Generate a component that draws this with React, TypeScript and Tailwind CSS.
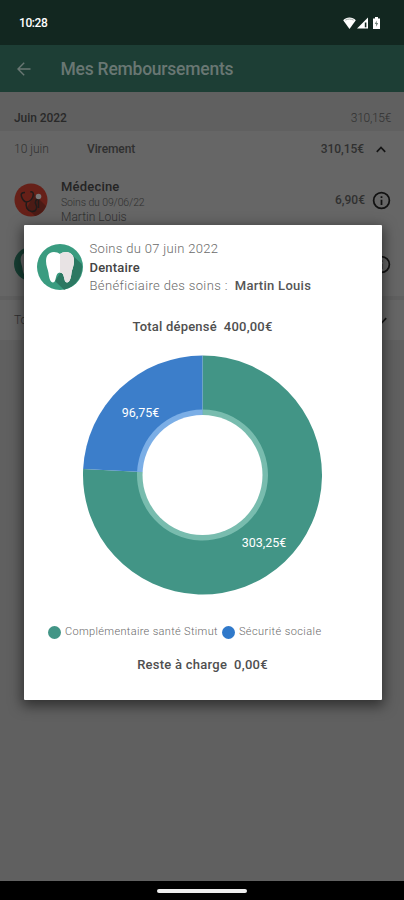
import type { ReactNode } from "react";

const slices = [
  { label: "Complémentaire santé Stimut", value: 303.25, color: "#429586", ring: "#78bcae" },
  { label: "Sécurité sociale", value: 96.75, color: "#3c7eca", ring: "#7baee6" },
];

const CENTER = 120;

function polar(radius: number, ratio: number) {
  const angle = ratio * Math.PI * 2;
  return `${CENTER + radius * Math.sin(angle)} ${CENTER - radius * Math.cos(angle)}`;
}

function slicePath(radius: number, from: number, to: number) {
  const large = to - from > 0.5 ? 1 : 0;
  return `M${CENTER} ${CENTER}L${polar(radius, from)}A${radius} ${radius} 0 ${large} 1 ${polar(radius, to)}Z`;
}

function DonutChart() {
  const total = slices.reduce((sum, s) => sum + s.value, 0);
  const split = slices[0].value / total;
  const ranges = [
    [0, split],
    [split, 1],
  ];

  return (
    <svg viewBox="-0.5 0 240 240" className="ml-[58.500px] block h-[240px] w-[240px]">
      {slices.map((s, i) => (
        <path key={s.label} d={slicePath(119.5, ranges[i][0], ranges[i][1])} fill={s.color} />
      ))}
      {slices.map((s, i) => (
        <path key={s.label} d={slicePath(65.5, ranges[i][0], ranges[i][1])} fill={s.ring} />
      ))}
      <circle cx={CENTER} cy={CENTER} r="60" fill="#fff" />
      <g fill="#fff" fontSize="12.5" textAnchor="middle">
        <text x="58" y="62">96,75€</text>
        <text x="181.5" y="192">303,25€</text>
      </g>
    </svg>
  );
}

function ToothIcon({ className }: { className: string }) {
  return (
    <svg viewBox="0 0 46 46" className={className}>
      <circle cx="23" cy="23" r="23" fill="#3a9c80" />
      <path d="M35 11 44.800 20A23 23 0 0 1 27 45.700L18 37Z" fill="#2c7862" />
      <path
        d="M23 10C19 6.500 9 6.500 9 17c0 5 2 8 2.500 12 .6 5.500 2 9.500 4.500 9.500 4 0 1.500-10 7-10s3 10 7 10c2.500 0 3.900-4 4.500-9.500.5-4 2.500-7 2.500-12 0-10.500-10-10.500-14-7Z"
        fill="#fff"
      />
      <path d="M23 10c4-3.500 14-3.500 14 7 0 5-2 8-2.500 12-.6 5.500-2 9.500-4.500 9.500-4 0-1.500-10-7-10Z" fill="#e8e3e4" />
    </svg>
  );
}

function StethoscopeIcon() {
  return (
    <svg viewBox="0 0 34 34" className="h-[34px] w-[34px]" fill="none">
      <circle cx="17" cy="17" r="16.500" fill="#662018" />
      <path d="m20 11 12 12a16.500 16.500 0 0 1-11 10l-8-8Z" fill="#4b1b15" />
      <path
        d="M11 9.500c-3 0-4.500 1-3.500 4 .8 2.500 2 5 5 5.500 4-.5 6.500-4 6.800-7.500.2-2-1-3-3-2.500M12.500 19c-1.500 5 1 9 5 9.500 5 .5 6-4 4.500-7-1.500-2.500 0-5 2.500-6.500v10"
        stroke="#211b1a"
        strokeWidth="1.500"
      />
      <circle cx="24.500" cy="13.500" r="2.800" fill="#777" />
    </svg>
  );
}

function InfoIcon() {
  return (
    <svg viewBox="0 0 24 24" className="h-[21px] w-[21px]" fill="#111">
      <path d="M11 17h2v-6h-2v6Zm0-8h2V7h-2v2Zm1-7a10 10 0 1 0 0 20 10 10 0 0 0 0-20Zm0 18a8 8 0 1 1 0-16 8 8 0 0 1 0 16Z" />
    </svg>
  );
}

function Chevron({ down = false }: { down?: boolean }) {
  return (
    <svg
      viewBox="0 0 10 7"
      className={`h-[7px] w-[10px] ${down ? "rotate-180" : ""}`}
      fill="none"
      stroke="#151515"
      strokeWidth="1.700"
    >
      <path d="m.8 5.800 4.200-4.300 4.200 4.300" />
    </svg>
  );
}

function StatusBar() {
  return (
    <div className="flex h-[45px] shrink-0 items-center justify-between bg-[#122720] pl-[19px] pr-[23px]">
      <span className="text-[12px] font-medium tracking-[-0.4px] text-white">10:28</span>
      <svg viewBox="0 0 38 14" className="h-[14px] w-[38px]" fill="#fff">
        <path d="M6.500 13 .2 4.200C3.500.6 9.500.6 12.800 4.200Z" />
        <path d="M2.300 4.200c2.400-1.500 6-1.500 8.400 0" stroke="#7e8884" strokeWidth=".7" fill="none" />
        <path d="M14 12.500 25 1.500v11Z" />
        <path d="M21.800 6.500h1.600v4.800h-1.600Z" fill="#122720" />
        <path d="M30 2.500h2V1h3v1.500h2V13h-7Z" />
        <path d="M33.700 4.500 31.800 8h1.300v2.800L35.200 7h-1.500Z" fill="#718079" />
      </svg>
    </div>
  );
}

function CareRow({ icon, amount, children }: { icon: ReactNode; amount?: string; children?: ReactNode }) {
  return (
    <div className="flex h-[64px] items-center pl-[14px] pr-3">
      {icon}
      <div className="ml-[13px] flex-1 pt-[3px]">{children}</div>
      <span className="mr-[6px] text-[12px] font-medium">{amount}</span>
      <InfoIcon />
    </div>
  );
}

function Refunds() {
  return (
    <main className="flex-1 bg-[#606060] pt-3 text-[#303030]">
      <div className="flex h-[27px] items-center justify-between pl-[14px] pr-[13px] text-[12px]">
        <span className="font-medium tracking-[-0.05px] text-[#292929]">Juin 2022</span>
        <span className="font-light tracking-[-0.3px]">310,15€</span>
      </div>
      <div className="bg-[#666]">
        <div className="flex h-[37px] items-center pb-px pl-[14px] pr-[18px] text-[12px]">
          <span className="w-[73px] font-light">10 juin</span>
          <span className="flex-1 font-medium tracking-[-0.1px]">Virement</span>
          <span className="mr-3 font-medium tracking-[-0.05px]">310,15€</span>
          <Chevron />
        </div>
        <CareRow icon={<StethoscopeIcon />} amount="6,90€">
          <p className="text-[13px] font-medium leading-[16px] tracking-[0.2px] text-[#242424]">Médecine</p>
          <p className="text-[10.500px] font-light leading-[15px] tracking-[-0.12px]">Soins du 09/06/22</p>
          <p className="text-[12px] font-light leading-[15px]">Martin Louis</p>
        </CareRow>
        <CareRow icon={<ToothIcon className="h-[34px] w-[34px] brightness-[0.4]" />} />
      </div>
      <div className="mt-[4px] flex h-[40px] items-center justify-between bg-[#666] pl-[14px] pr-[17px] text-[12px] font-light">
        <span>Total</span>
        <Chevron down />
      </div>
    </main>
  );
}

function CareDialog() {
  return (
    <div
      role="dialog"
      className="absolute left-[23.500px] top-[225px] h-[474.500px] w-[358px] rounded-[1px] bg-white text-[#6a6a6a] shadow-[0_4px_13px_2px_rgba(0,0,0,0.5)]"
    >
      <div className="flex h-[83px] items-center pl-[13.500px]">
        <ToothIcon className="h-[46px] w-[46px]" />
        <div className="ml-[6.500px] pt-[3px] text-[13px] leading-[18.500px]">
          <p className="font-light tracking-[0.32px]">Soins du 07 juin 2022</p>
          <p className="font-medium tracking-[0.2px] text-[#444]">Dentaire</p>
          <p className="font-light tracking-[0.36px]">
            Bénéficiaire des soins :<span className="ml-[7px] font-medium tracking-[0.28px] text-[#555]">Martin Louis</span>
          </p>
        </div>
      </div>
      <p className="mt-[10px] text-center text-[13px] font-medium leading-[18px] tracking-[0.2px] text-[#4f4f4f]">
        Total dépensé<span className="ml-[7px]">400,00€</span>
      </p>
      <div className="mt-[19px]">
        <DonutChart />
      </div>
      <div className="mt-[29px] flex h-[16px] items-center pl-[24.500px] text-[11px] font-light">
        <span className="mr-1 h-[13px] w-[13px] shrink-0 rounded-full bg-[#429586]" />
        <span className="tracking-[0.33px]">{slices[0].label}</span>
        <span className="ml-[4px] mr-1 h-[13px] w-[13px] shrink-0 rounded-full bg-[#3079ca]" />
        <span className="tracking-[0.42px]">{slices[1].label}</span>
      </div>
      <p className="mt-[16px] text-center text-[13px] font-medium leading-[18px] tracking-[0.25px] text-[#4f4f4f]">
        Reste à charge<span className="ml-[7px]">0,00€</span>
      </p>
    </div>
  );
}

export default function App() {
  return (
    <div className="relative flex h-[900px] w-[404px] flex-col overflow-hidden font-['Roboto',sans-serif]">
      <StatusBar />
      <header className="flex h-[47px] shrink-0 items-center bg-[#1d3e35] pl-[17px] text-[#697773]">
        <svg viewBox="0 0 14 14" className="h-[14px] w-[14px]" fill="none" stroke="currentColor" strokeWidth="1.400">
          <path d="M7.200.8 1 7l6.200 6.200M1 7h12.500" />
        </svg>
        <h1 className="ml-[29.500px] pt-px text-[17.500px] font-medium tracking-[-0.23px]">Mes Remboursements</h1>
      </header>
      <Refunds />
      <footer className="flex h-[19px] shrink-0 items-center justify-center bg-black">
        <span className="h-[4px] w-[90px] rounded-full bg-[#eee]" />
      </footer>
      <CareDialog />
    </div>
  );
}
